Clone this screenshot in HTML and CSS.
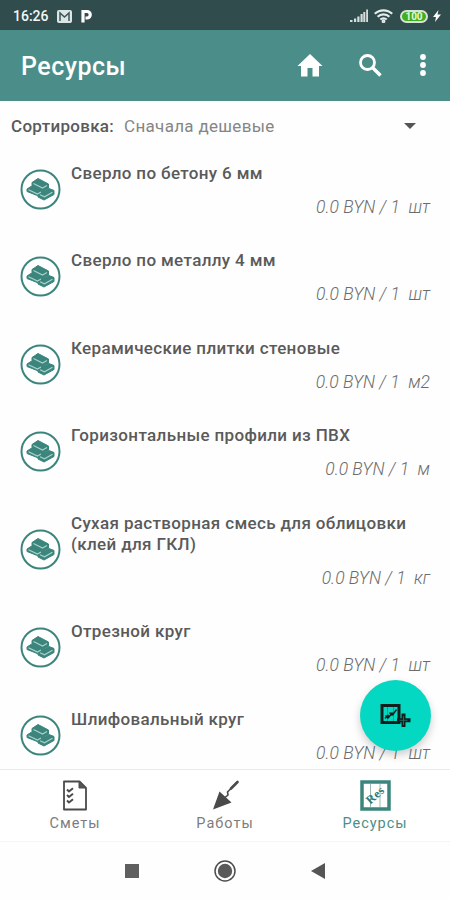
FILE: index.html
```html
<!DOCTYPE html>
<html lang="ru">
<head>
    <meta charset="UTF-8">
    <meta name="viewport" content="width=device-width, initial-scale=1.0">
    <title>Ресурсы</title>
    <link rel="stylesheet" href="styles.css">
</head>
<body>
    <!-- Shared icon for the resource rows -->
    <svg class="sprite" aria-hidden="true">
        <symbol id="bars" viewBox="0 0 41 41">
            <circle cx="20.5" cy="20.5" r="19" fill="#fff" stroke="#3b857d" stroke-width="2"/>
            <g fill="#3b857d" stroke="#3b857d" stroke-width="1" stroke-linejoin="round">
                <path d="M7 20l5.500-3.500 11 5.500-.5 3-4.500 2L7 22.500z"/>
                <path d="M18 25l11-5.500 5 2v4L24 31l-6-3z"/>
                <path d="M12 13.500l6-4 10.500 5.500v4L23 22l-11-5.500z"/>
            </g>
            <path d="M13.500 14.500l9 4.500 4.500-2.500M8.500 20.800l9 4.200 3.500-2M20 25.800l4.500 2 8-4.500" fill="none" stroke="#a9d2cc" stroke-width="1.200"/>
        </symbol>
    </svg>

    <div class="screen">
        <div class="status-bar">
            <span class="time">16:26</span>
            <svg class="mail" width="15" height="13" viewBox="0 0 15 13">
                <rect width="15" height="13" rx="2" fill="#dce6e6"/>
                <path d="M3 11V3l4.500 4L12 3v8" fill="none" stroke="#3d5656" stroke-width="1.500"/>
            </svg>
            <svg class="parking" width="12" height="14" viewBox="0 0 12 14">
                <path d="M2 13.500V2.500h4a3 3 0 0 1 0 6.500H4.500" fill="none" stroke="#fff" stroke-width="3.200"/>
            </svg>
            <div class="status-right">
                <svg width="19" height="14" viewBox="0 0 19 14" fill="#d5dfdf">
                    <path d="M0 11h2.500v2H0zM4 9.500h2.200V13H4zM7.300 7.500h2.200V13H7.300zM10.500 5h2.200v8h-2.200zM13.300 3h2v10h-2zM16.200 .5h1.800V13h-1.800z"/>
                </svg>
                <svg width="19" height="14" viewBox="0 0 19 14" fill="none" stroke="#e4eded" stroke-width="2.200">
                    <path d="M.8 4.800a12.500 12.500 0 0 1 17.400 0M3.600 7.800a8.500 8.500 0 0 1 11.800 0M6.300 10.500a4.700 4.700 0 0 1 6.400 0"/>
                    <circle cx="9.500" cy="12.200" r=".8"/>
                </svg>
                <span class="battery">100</span>
                <svg class="bolt" width="8" height="12" viewBox="0 0 8 12"><path d="M5.500 0L0 7h3L2 12l6-7.500H4.500z" fill="#fff"/></svg>
            </div>
        </div>

        <header class="app-bar">
            <h1>Ресурсы</h1>
            <svg class="home" width="26" height="23" viewBox="0 0 26 23"><path d="M13 0L.5 12H4v10.500h6.500V14h5v8.500H22V12h3.500z" fill="#fff"/></svg>
            <svg class="search" width="23" height="23" viewBox="0 0 23 23" fill="none" stroke="#fff">
                <circle cx="8.500" cy="8.500" r="7" stroke-width="2.800"/>
                <path d="M14 14l7.500 7.500" stroke-width="3.400"/>
            </svg>
            <svg class="more" width="6" height="22" viewBox="0 0 6 22" fill="#fff">
                <circle cx="3" cy="3" r="2.900"/><circle cx="3" cy="11" r="2.900"/><circle cx="3" cy="19" r="2.900"/>
            </svg>
        </header>

        <div class="sort">
            <span class="sort-label">Сортировка:</span>
            <span class="sort-value">Сначала дешевые</span>
            <span class="arrow"></span>
        </div>

        <main class="list">
            <div class="item">
                <svg class="item-icon"><use href="#bars"/></svg>
                <div class="item-body">
                    <div class="item-title">Сверло по бетону 6 мм</div>
                    <div class="item-price">0.0 BYN / 1  шт</div>
                </div>
            </div>
            <div class="item">
                <svg class="item-icon"><use href="#bars"/></svg>
                <div class="item-body">
                    <div class="item-title">Сверло по металлу 4 мм</div>
                    <div class="item-price">0.0 BYN / 1  шт</div>
                </div>
            </div>
            <div class="item">
                <svg class="item-icon"><use href="#bars"/></svg>
                <div class="item-body">
                    <div class="item-title">Керамические плитки стеновые</div>
                    <div class="item-price">0.0 BYN / 1  м2</div>
                </div>
            </div>
            <div class="item">
                <svg class="item-icon"><use href="#bars"/></svg>
                <div class="item-body">
                    <div class="item-title">Горизонтальные профили из ПВХ</div>
                    <div class="item-price">0.0 BYN / 1  м</div>
                </div>
            </div>
            <div class="item">
                <svg class="item-icon"><use href="#bars"/></svg>
                <div class="item-body">
                    <div class="item-title">Сухая растворная смесь для облицовки<br>(клей для ГКЛ)</div>
                    <div class="item-price">0.0 BYN / 1  кг</div>
                </div>
            </div>
            <div class="item">
                <svg class="item-icon"><use href="#bars"/></svg>
                <div class="item-body">
                    <div class="item-title">Отрезной круг</div>
                    <div class="item-price">0.0 BYN / 1  шт</div>
                </div>
            </div>
            <div class="item">
                <svg class="item-icon"><use href="#bars"/></svg>
                <div class="item-body">
                    <div class="item-title">Шлифовальный круг</div>
                    <div class="item-price">0.0 BYN / 1  шт</div>
                </div>
            </div>
        </main>

        <button class="fab" aria-label="Добавить ресурс">
            <svg width="32" height="26" viewBox="0 0 32 26">
                <path d="M2 2.500h17v17H2z" fill="none" stroke="#101f1d" stroke-width="3"/>
                <path d="M7.500 4v14M13.500 4v14" stroke="#188c7d" stroke-width=".8"/>
                <path d="M5 15.500l3-3 1 1.500 3-4 1 1.500 3.500-5M5.500 12.500l3 3M9.500 9.500l3 3" fill="none" stroke="#101f1d" stroke-width="1.500"/>
                <path d="M23.500 10.500v13.500M17 17.300h13.500" stroke="#101f1d" stroke-width="4"/>
                <path d="M23.500 13v9M19.500 17.300h8" stroke="#24665e" stroke-width="1"/>
            </svg>
        </button>

        <nav class="tabs">
            <div class="tab">
                <svg width="26" height="31" viewBox="0 0 26 31" fill="none" stroke="#4a4a4a">
                    <path d="M2 1.500h15.500l6.500 6.500v21.500H2z" stroke-width="1.800" stroke-linejoin="round"/>
                    <path d="M17 1v7h7z" fill="#555"/>
                    <path d="M5 9.500l2 2 4-3.200M5 15l2 2 4-3.200M5 20.500l2 2 4-3.200" stroke-width="2"/>
                </svg>
                <span>Сметы</span>
            </div>
            <div class="tab">
                <svg width="30" height="31" viewBox="0 0 30 31">
                    <path d="M9.500 11.500L3 29.500l18.500-7z" fill="#4a4a4a"/>
                    <path d="M15 17.500l3-2.500-.5-3 3.500-3.500" fill="none" stroke="#4a4a4a" stroke-width="1.600"/>
                    <path d="M21 8.500l6.500-6.500" stroke="#4a4a4a" stroke-width="2.600" stroke-linecap="round"/>
                </svg>
                <span>Работы</span>
            </div>
            <div class="tab active">
                <svg width="31" height="31" viewBox="0 0 31 31">
                    <rect x="2" y="2" width="27" height="27" fill="#fff" stroke="#3b857d" stroke-width="3.500"/>
                    <path d="M10.500 4v23M20 4v23" stroke="#9bb8b5"/>
                    <text class="res-mark" x="15.500" y="19" transform="rotate(-42 15.500 15.500)">Res</text>
                </svg>
                <span>Ресурсы</span>
            </div>
        </nav>

        <div class="system-bar">
            <svg width="14" height="14" viewBox="0 0 14 14"><path d="M0 0h14v14H0z" fill="#5f5f5f"/></svg>
            <svg width="22" height="22" viewBox="0 0 22 22">
                <circle cx="11" cy="11" r="10" fill="#fff" stroke="#4d4d4d" stroke-width="1.500"/>
                <circle cx="11" cy="11" r="7.200" fill="#5a5a5a"/>
            </svg>
            <svg width="14" height="16" viewBox="0 0 14 16"><path d="M14 0v16L0 8z" fill="#555"/></svg>
        </div>
    </div>
</body>
</html>
```

FILE: styles.css
```css
body {
    margin: 0;
    background: #fefefe;
    color: #5a5a5a;
    font-family: Roboto, "Noto Sans", sans-serif;
}

svg {
    display: block;
    flex: none;
}

.sprite {
    position: absolute;
    width: 0;
    height: 0;
}

.screen {
    position: relative;
    display: flex;
    flex-direction: column;
    width: 450px;
    height: 900px;
    overflow: hidden;
}

/* Status bar */
.status-bar {
    flex: none;
    display: flex;
    align-items: center;
    height: 30px;
    padding: 2px 9px 0 13px;
    box-sizing: border-box;
    background: #304c4d;
    color: #f2f7f7;
}

.time {
    width: 44px;
    font-size: 14px;
    font-weight: 500;
}

.parking {
    margin-left: 9px;
}

.status-right {
    display: flex;
    align-items: center;
    gap: 5px;
    margin-left: auto;
}

.battery {
    width: 24px;
    height: 9px;
    margin-left: 2px;
    border: 2px solid #d8e3d8;
    border-radius: 7px;
    background: #3fae20;
    color: #e9f7dc;
    font-size: 10px;
    font-weight: 700;
    line-height: 9px;
    text-align: center;
}

/* Toolbar */
.app-bar {
    flex: none;
    display: flex;
    align-items: center;
    height: 70.500px;
    padding: 0 24px 0 21px;
    background: #4b8e89;
}

.app-bar h1 {
    margin: 3px auto 0 0;
    color: #fff;
    font-size: 25px;
    font-weight: 500;
    letter-spacing: 0.5px;
}

.search {
    margin-left: 36px;
}

.more {
    margin-left: 38px;
}

/* Sorting */
.sort {
    flex: none;
    display: flex;
    align-items: center;
    height: 51px;
    padding: 0 34px 0 11px;
    font-size: 17px;
}

.sort-label {
    font-weight: 500;
    letter-spacing: 0.3px;
}

.sort-value {
    margin-left: 10px;
    color: #858585;
    letter-spacing: 0.3px;
}

.arrow {
    margin-left: auto;
    border: 6px solid transparent;
    border-top-color: #555;
    border-bottom: 0;
}

/* Resources */
.list {
    flex: 1;
    min-height: 0;
    padding-top: 11px;
    overflow: hidden;
}

.item {
    display: flex;
    align-items: center;
    gap: 10px;
    padding: 0 20px 32.500px;
}

.item-icon {
    width: 41px;
    height: 41px;
    margin-bottom: 2px;
}

.item-body {
    flex: 1;
}

.item-title {
    font-size: 17px;
    font-weight: 500;
    line-height: 21px;
    letter-spacing: 0.35px;
}

.item-price {
    margin-top: 12px;
    color: #6c6c6c;
    font-size: 17.500px;
    font-style: italic;
    font-weight: 300;
    line-height: 22px;
    text-align: right;
    white-space: pre;
}

.fab {
    position: absolute;
    right: 19px;
    bottom: 149px;
    display: flex;
    align-items: center;
    justify-content: center;
    width: 71px;
    height: 71px;
    padding: 0;
    border: none;
    border-radius: 50%;
    background: #05d8c2;
    box-shadow: 0 4px 8px rgba(0, 0, 0, 0.2);
}

/* Bottom navigation */
.tabs {
    flex: none;
    display: flex;
    height: 72px;
    border-top: 1px solid #e9e9e9;
    box-sizing: border-box;
    background: #fff;
}

.tab {
    flex: 1;
    display: flex;
    flex-direction: column;
    align-items: center;
    padding-top: 10px;
    color: #7d7d7d;
    font-size: 14.500px;
    line-height: 18px;
    letter-spacing: 1px;
}

.tab span {
    margin-top: 4px;
}

.tab.active {
    color: #4b8e89;
}

.res-mark {
    fill: #2f7972;
    font-family: "Liberation Serif", serif;
    font-size: 12px;
    font-weight: 700;
    letter-spacing: 0.5px;
    text-anchor: middle;
}

.system-bar {
    flex: none;
    display: flex;
    align-items: center;
    justify-content: center;
    gap: 75px;
    height: 59px;
    border-top: 1px solid #f4f4f4;
    box-sizing: border-box;
}
```
